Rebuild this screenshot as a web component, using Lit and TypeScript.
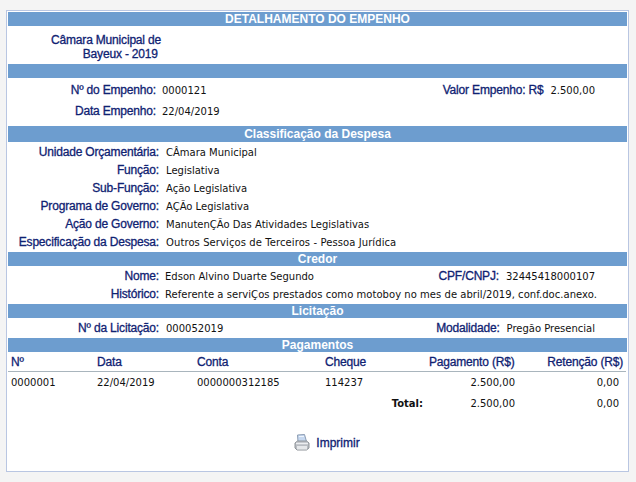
import { LitElement, html, css } from "lit";
import { customElement } from "lit/decorators.js";

const printer = html`<svg class="ico" width="16" height="17" viewBox="0 0 16 17">
  <path d="M3.5 1 L10.5 0.5 L12.5 7.5 L4 7.5 Z" fill="#c6d8f0" stroke="#8d9db3" stroke-width="1"/>
  <path d="M5 2.5 H10" stroke="#eef4fb" stroke-width="1"/>
  <path d="M1 9 L3.5 7 H12.5 L15 9 V14 L12.5 16 H3 L1 14 Z" fill="#b9bdc2" stroke="#8f9499" stroke-width="1"/>
  <path d="M2 9.5 H14" stroke="#eceef0" stroke-width="1.5"/>
  <path d="M3 12 H13 V15.5 H3 Z" fill="#e6e8ea"/>
</svg>`;

@customElement("app-root")
export class AppRoot extends LitElement {
  static styles = css`
    :host { display: block; background: #f4f4f4; height: 482px; padding: 10px 0 0 6px; box-sizing: border-box; font-family: "DejaVu Sans", sans-serif; font-size: 10px; color: #111; }
    .box { border: 1px solid #b9c6e2; height: 462px; box-sizing: border-box; background: #fff; padding: 1px; width: 623px; }
    .bar { background: #6d9dcf; color: #fff; font: bold 12px/14px "Liberation Sans", sans-serif; text-align: center; height: 14px; }
    .tall { height: 16px; line-height: 16px; }
    .group { padding: 1px 0; }
    .row { display: grid; align-items: center; }
    .lbl { font: 12px "Liberation Sans", sans-serif; letter-spacing: -0.18px; color: #0f2272; -webkit-text-stroke: 0.3px #0f2272; text-align: right; white-space: nowrap; }
    .t { white-space: nowrap; }
    .wide { letter-spacing: 0.09px; }
    .h { letter-spacing: 0.04px; white-space: nowrap; }
    .org { width: 153px; height: 38px; padding-top: 7px; box-sizing: border-box; line-height: 14px; }
    .emp { grid-template-columns: 148px 1fr auto; padding-right: 32px; }
    .emp1 { height: 24px; }
    .emp2 { height: 18px; margin-bottom: 6px; }
    .cl { grid-template-columns: 151px 1fr auto; height: 18px; padding-right: 32px; }
    .two { height: 20px; }
    .v { padding-left: 6px; }
    .cl .v { padding-left: 7px; }
    .cl .n { padding-left: 6px; }
    .side { display: flex; align-items: center; gap: 7px; }
    table { border-collapse: collapse; width: 618px; table-layout: fixed; }
    th { font: 12px "Liberation Sans", sans-serif; letter-spacing: -0.18px; color: #0f2272; -webkit-text-stroke: 0.3px #0f2272; height: 19px; padding: 0 0 0 3px; text-align: left; border-bottom: 1px solid #a9b5bd; white-space: nowrap; }
    td { height: 20px; padding: 0 0 0 3px; white-space: nowrap; }
    .total td { height: 22px; }
    th.n { text-align: right; padding-right: 2px; }
    td.n { text-align: right; padding-right: 1px; }
    th.e { text-align: right; padding-right: 3px; }
    td.e { text-align: right; padding-right: 7px; }
    td.tot { font-weight: bold; text-align: right; padding-right: 3px; }
    .print { display: flex; justify-content: center; align-items: center; gap: 6px; margin-top: 20px; padding-left: 19px; font: 12px "Liberation Sans", sans-serif; color: #0f2272; -webkit-text-stroke: 0.3px #0f2272; }
  `;
  render() {
    const cls = [
      ["Unidade Orçamentária:", "CÂmara Municipal", "t"],
      ["Função:", "Legislativa", "t"],
      ["Sub-Função:", "Ação Legislativa", "t"],
      ["Programa de Governo:", "AÇÃo Legislativa", "t"],
      ["Ação de Governo:", "ManutenÇÃo Das Atividades Legislativas", "t"],
      ["Especificação da Despesa:", "Outros Serviços de Terceiros - Pessoa Jurídica", "t wide"],
    ];
    return html`<div class="box">
      <div class="bar">DETALHAMENTO DO EMPENHO</div>
      <div class="lbl org">Câmara Municipal de<br />Bayeux - 2019&nbsp;</div>
      <div class="bar"></div>
      <div class="row emp emp1"><div class="lbl">Nº do Empenho:</div><div class="v">0000121</div><div class="side"><span class="lbl">Valor Empenho: R$</span><span>2.500,00</span></div></div>
      <div class="row emp emp2"><div class="lbl">Data Empenho:</div><div class="v">22/04/2019</div></div>
      <div class="bar tall">Classificação da Despesa</div>
      <div class="group">
        ${cls.map(([a, b, c]) => html`<div class="row cl"><div class="lbl">${a}</div><div class="v ${c}">${b}</div></div>`)}
      </div>
      <div class="bar">Credor</div>
      <div class="group">
        <div class="row cl"><div class="lbl">Nome:</div><div class="v n t">Edson Alvino Duarte Segundo</div><div class="side"><span class="lbl">CPF/CNPJ:</span><span>32445418000107</span></div></div>
        <div class="row cl"><div class="lbl">Histórico:</div><div class="v n h">Referente a serviÇos prestados como motoboy no mes de abril/2019, conf.doc.anexo.</div></div>
      </div>
      <div class="bar">Licitação</div>
      <div class="row cl two"><div class="lbl">Nº da Licitação:</div><div class="v">000052019</div><div class="side"><span class="lbl">Modalidade:</span><span class="t">Pregão Presencial</span></div></div>
      <div class="bar">Pagamentos</div>
      <table>
        <colgroup><col width="86" /><col width="100" /><col width="128" /><col width="104" /><col width="90" /><col width="110" /></colgroup>
        <tr><th>Nº</th><th>Data</th><th>Conta</th><th>Cheque</th><th class="n">Pagamento (R$)</th><th class="e">Retenção (R$)</th></tr>
        <tr><td>0000001</td><td>22/04/2019</td><td>0000000312185</td><td>114237</td><td class="n">2.500,00</td><td class="e">0,00</td></tr>
        <tr class="total"><td></td><td></td><td></td><td class="tot">Total:</td><td class="n">2.500,00</td><td class="e">0,00</td></tr>
      </table>
      <div class="print">${printer}<span>Imprimir</span></div>
    </div>`;
  }
}
